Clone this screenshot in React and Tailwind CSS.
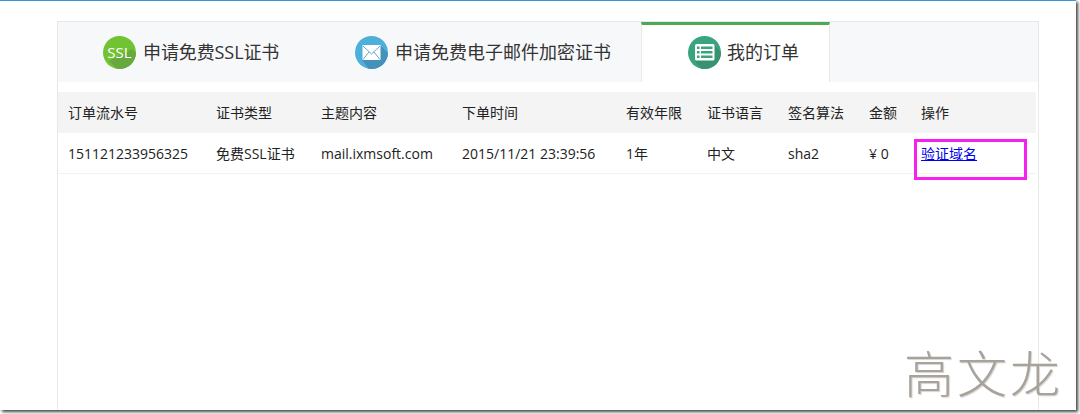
import React from "react";

function SslIcon() {
  return (
    <svg width="33" height="33" viewBox="0 0 33 33" className="shrink-0">
      <defs><clipPath id="c1"><circle cx="16.5" cy="16.5" r="16.5" /></clipPath></defs>
      <circle cx="16.5" cy="16.5" r="16.5" fill="#72c333" />
      <path d="M29 13 L33 17 L33 33 L14 33 L6 25 Z" fill="#68a93f" clipPath="url(#c1)" />
      <text x="16.5" y="21.5" textAnchor="middle" fontSize="15" fill="#fff" fontFamily="'Open Sans',sans-serif">SSL</text>
    </svg>
  );
}

function MailIcon() {
  return (
    <svg width="33" height="33" viewBox="0 0 33 33" className="shrink-0">
      <defs><clipPath id="c2"><circle cx="16.5" cy="16.5" r="16.5" /></clipPath></defs>
      <circle cx="16.5" cy="16.5" r="16.5" fill="#4fafdb" />
      <path d="M26 10 L36 20 L36 36 L16 36 L7 24 Z" fill="#4492b9" clipPath="url(#c2)" />
      <rect x="7.5" y="9" width="18" height="15" fill="#fff" />
      <path d="M8 10 L16.5 18 L25 10" fill="none" stroke="#6ba6cc" strokeWidth="1" />
      <path d="M8 23.5 L14 16 M25 23.5 L19 16" fill="none" stroke="#6ba6cc" strokeWidth="1" />
    </svg>
  );
}

function ListIcon() {
  return (
    <svg width="33" height="33" viewBox="0 0 33 33" className="shrink-0">
      <defs><clipPath id="c3"><circle cx="16.5" cy="16.5" r="16.5" /></clipPath></defs>
      <circle cx="16.5" cy="16.5" r="16.5" fill="#3aa47f" />
      <path d="M26 9 L36 19 L36 36 L16 36 L7 25 Z" fill="#37926f" clipPath="url(#c3)" />
      <rect x="7" y="8" width="19.5" height="16.5" rx="1.5" fill="#fff" />
      <g fill="#3aa47f">
        <rect x="9" y="10.5" width="2.5" height="2.5" />
        <rect x="9" y="15" width="2.5" height="2.5" />
        <rect x="9" y="19.5" width="2.5" height="2.5" />
        <rect x="13" y="10.5" width="11.5" height="2.5" />
        <rect x="13" y="15" width="11.5" height="2.5" />
        <rect x="13" y="19.5" width="11.5" height="2.5" />
      </g>
    </svg>
  );
}

const headers = ["订单流水号", "证书类型", "主题内容", "下单时间", "有效年限", "证书语言", "签名算法", "金额", "操作"];
const cells = ["151121233956325", "免费SSL证书", "mail.ixmsoft.com", "2015/11/21 23:39:56", "1年", "中文", "sha2", "¥ 0"];
const grid = "grid grid-cols-[148px_105px_141px_164px_81px_81px_81px_52px_125px]";

export default function App() {
  return (
    <div className="w-[1080px] h-[414px] overflow-hidden bg-white font-['Open_Sans','Noto_Sans_CJK_SC',sans-serif]">
      <div className="relative w-[1076px] h-[410px] bg-white border-t border-[#3397d3] pt-[20px] pl-[57px] shadow-[2px_2px_3px_#444]">
        <div className="w-[982px] h-[389px] border-x border-t border-[#e8e8e8]">
          <div className="flex h-[60px] bg-[#f7f8fa] text-[18px] text-[#333]">
            <div className="flex w-[252px] items-center gap-[7px] pl-[45px]">
              <SslIcon />
              <span className="tracking-[-0.1px]">申请免费SSL证书</span>
            </div>
            <div className="flex w-[331px] items-center gap-[7px] pl-[45px]">
              <MailIcon />
              <span>申请免费电子邮件加密证书</span>
            </div>
            <div className="flex w-[189px] items-center gap-[6px] pl-[46px] bg-white border-x border-[#e8e8e8] border-t-[3px] border-t-[#4caa55] pb-[3px]">
              <ListIcon />
              <span>我的订单</span>
            </div>
          </div>
          <div className="mt-[10px] mr-[2px] text-[14px] text-[#222]">
            <div className={`${grid} h-[41px] items-center bg-[#f4f4f4]`}>
              {headers.map((h) => (
                <div key={h} className="pl-[10px]">{h}</div>
              ))}
            </div>
            <div className={`${grid} h-[41px] items-center border-b border-[#f2f2f2]`}>
              {cells.map((c) => (
                <div key={c} className="pl-[10px]">{c}</div>
              ))}
              <div className="relative pl-[10px]">
                <a href="#" className="text-[#0000ee] underline">验证域名</a>
                <div className="absolute left-[3px] top-[-4px] w-[113px] h-[41px] border-[3px] border-[#f81ff0]" />
              </div>
            </div>
          </div>
        </div>
        <div className="absolute right-[13px] top-[335px] text-[50px] leading-[70px] tracking-[3px] text-[#a8a29c] [text-shadow:1px_1px_1px_#d8d4d0] font-['Noto_Sans_CJK_SC',serif] font-light">
          高文龙
        </div>
      </div>
    </div>
  );
}
